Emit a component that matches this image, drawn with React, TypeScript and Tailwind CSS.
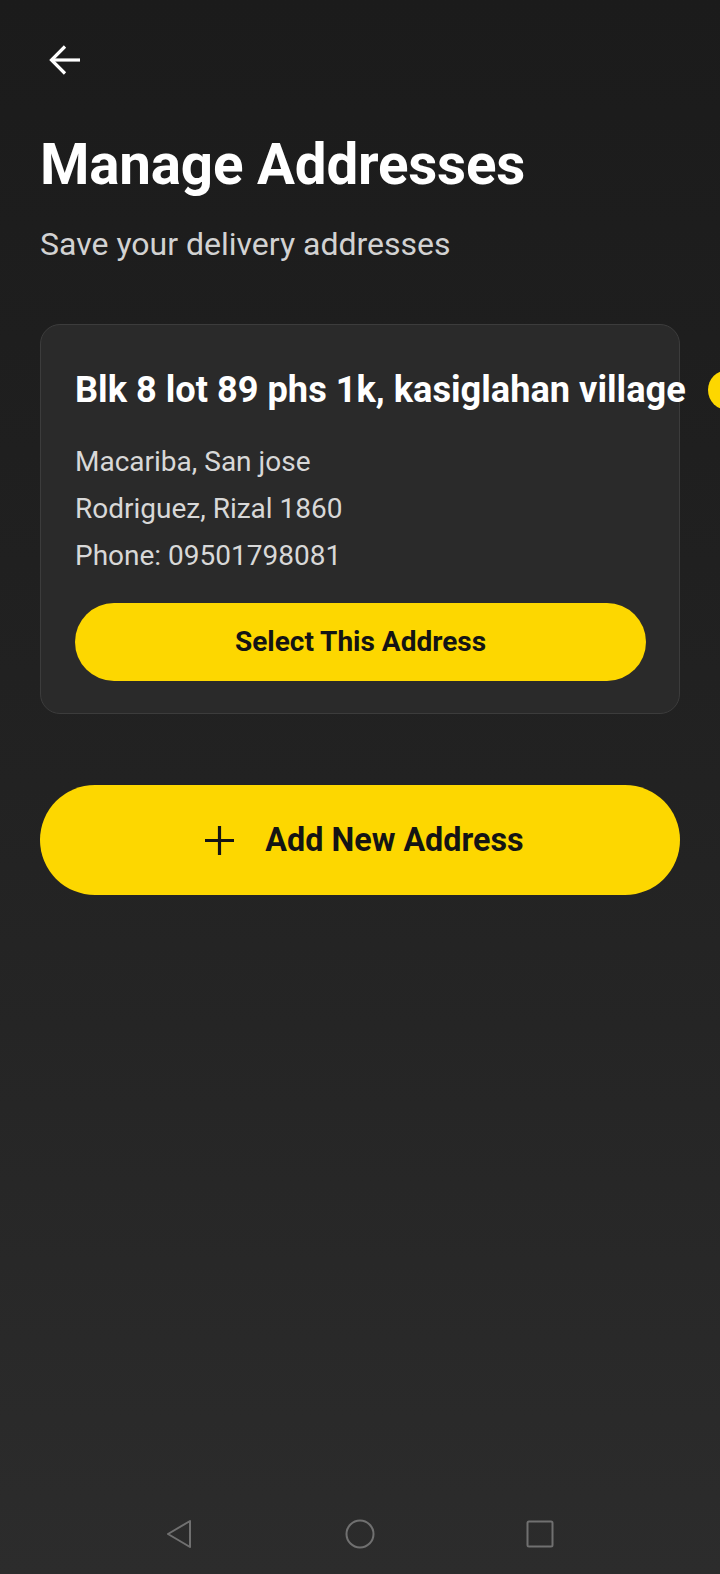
const address = {
	line1: "Blk 8 lot 89 phs 1k, kasiglahan village",
	line2: "Macariba, San jose",
	line3: "Rodriguez, Rizal 1860",
	phone: "09501798081",
};

function BackArrow() {
	return (
		<svg width="34" height="34" viewBox="0 0 34 34" fill="none" stroke="#ffffff" strokeWidth="3.2">
			<path d="M32 17H4" />
			<path d="M17 3.5L3.5 17L17 30.5" />
		</svg>
	);
}

function Plus() {
	return (
		<svg width="31" height="31" viewBox="0 0 31 31" fill="none" stroke="#141414" strokeWidth="3.2">
			<path d="M15.5 1v29M1 15.5h29" />
		</svg>
	);
}

export default function App() {
	return (
		<div
			className="w-full min-h-[1574px] flex flex-col bg-linear-to-b from-[#1b1b1b] via-[#222222] to-[#2c2c2c] text-white overflow-hidden"
			style={{ fontFamily: "Roboto, 'Noto Sans', sans-serif" }}
		>
			<div className="flex-1 px-10">
				<button type="button" className="mt-[43px] ml-2 block">
					<BackArrow />
				</button>

				<h1 className="mt-[56px] text-[56.5px] leading-[64px] font-bold tracking-[-0.2px]">Manage Addresses</h1>
				<p className="mt-[28px] text-[32px] leading-[38px] text-[#d2d2d2]">Save your delivery addresses</p>

				<div className="mt-[61px] rounded-[20px] border border-[#3c3c3c] bg-[#2a2a2a] pl-[34px] pr-[33px] pt-[43px] pb-[32px]">
					<div className="flex items-center gap-[22px] whitespace-nowrap">
						<h2 className="text-[36.2px] leading-[44px] font-bold">{address.line1}</h2>
						<span className="w-10 h-10 shrink-0 rounded-full bg-[#fdd700]" />
					</div>
					<div className="mt-[32px] flex flex-col gap-[11px] text-[28px] leading-[36px] text-[#d8d8d8]">
						<p>{address.line2}</p>
						<p>{address.line3}</p>
						<p>Phone: {address.phone}</p>
					</div>
					<button
						type="button"
						className="mt-[29px] w-full h-[78px] rounded-full bg-[#fdd700] text-[#141414] text-[28px] font-bold"
					>
						Select This Address
					</button>
				</div>

				<button
					type="button"
					className="mt-[71px] w-full h-[110px] rounded-full bg-[#fdd700] text-[#141414] flex items-center justify-center gap-[30px] pl-2"
				>
					<Plus />
					<span className="text-[32.3px] font-bold">Add New Address</span>
				</button>
			</div>

			<div className="h-[80px] flex items-center justify-center gap-[151px]">
				<svg width="28" height="30" viewBox="0 0 28 30" fill="none" stroke="#707070" strokeWidth="2" strokeLinejoin="round">
					<path d="M24 2L2 15L24 28Z" />
				</svg>
				<svg width="30" height="30" viewBox="0 0 30 30" fill="none" stroke="#707070" strokeWidth="2">
					<circle cx="15" cy="15" r="13.5" />
				</svg>
				<svg width="28" height="28" viewBox="0 0 28 28" fill="none" stroke="#707070" strokeWidth="2">
					<rect x="1.5" y="1.5" width="25" height="25" rx="1.5" />
				</svg>
			</div>
		</div>
	);
}
